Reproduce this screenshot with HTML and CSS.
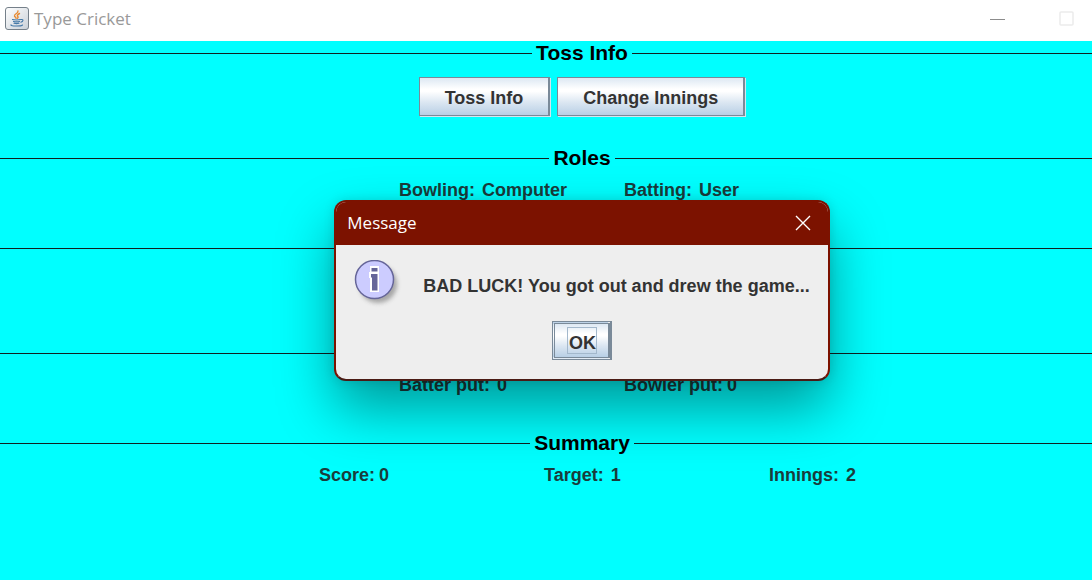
FILE: index.html
```html
<!DOCTYPE html>
<html lang="en">
<head>
<meta charset="utf-8">
<title>Type Cricket</title>
<link rel="stylesheet" href="styles.css">
</head>
<body>
<div class="frame">
  <header class="titlebar">
    <svg class="java-icon" viewBox="0 0 24 24" aria-hidden="true">
      <defs>
        <linearGradient id="tile" x1="0" y1="0" x2="1" y2="1">
          <stop offset="0" stop-color="#ffffff"/>
          <stop offset="1" stop-color="#c9d0d8"/>
        </linearGradient>
      </defs>
      <rect x="0.5" y="0.5" width="23" height="22" rx="2.5" fill="url(#tile)" stroke="#75808a"/>
      <g fill="none" stroke-linecap="round">
        <path d="M13 4c.5 2.500-4 3-3.500 5 .3 1 1.500 1.200 1.500 2.200M14.500 6.500c-2.500 1.200-2.500 2.300-1.600 3.100.5.600 0 1.200-.5 1.600" stroke="#e8882e" stroke-width="1.400"/>
        <path d="M7.500 12.500c1.500.6 6.500.6 8 0M8.500 14.400c1.500.5 4.500.5 6 0M9 16.200c1.500.5 3.500.5 5 0M16.300 12.500c2.400-.5 2.200 2-.5 2.700M6 17.800c-1 1.500 10 1.700 11.500.2" stroke="#4479a8" stroke-width="1.100"/>
      </g>
    </svg>
    <h1 class="window-title">Type Cricket</h1>
    <div class="window-controls">
      <button class="window-button" aria-label="Minimize"><svg width="16" height="16" viewBox="0 0 16 16"><path d="M0 8.500h15" stroke="#8c8c8c"/></svg></button>
      <button class="window-button" aria-label="Maximize" disabled><svg width="16" height="16" viewBox="0 0 16 16"><rect x="1" y="1" width="13" height="13" rx="1" fill="none" stroke="#ebebeb" stroke-width="1.500"/></svg></button>
    </div>
  </header>
  <main class="content">
    <section class="panel">
      <h2 class="panel-title">Toss Info</h2>
      <div class="buttons">
        <button class="button">Toss Info</button>
        <button class="button">Change Innings</button>
      </div>
    </section>
    <section class="panel">
      <h2 class="panel-title">Roles</h2>
      <div class="row row-two">
        <p class="stat"><span>Bowling:</span><span>Computer</span></p>
        <p class="stat"><span>Batting:</span><span>User</span></p>
      </div>
    </section>
    <section class="panel panel-tall">
      <div class="panel-title panel-untitled"></div>
    </section>
    <section class="panel">
      <div class="panel-title panel-untitled"></div>
      <div class="row row-two">
        <p class="stat"><span>Batter put:</span><span>0</span></p>
        <p class="stat tight"><span>Bowler put:</span><span>0</span></p>
      </div>
    </section>
    <section class="panel">
      <h2 class="panel-title">Summary</h2>
      <div class="row row-three">
        <p class="stat tight"><span>Score:</span><span>0</span></p>
        <p class="stat"><span>Target:</span><span>1</span></p>
        <p class="stat"><span>Innings:</span><span>2</span></p>
      </div>
    </section>
  </main>
  <div class="overlay">
    <div class="message" role="dialog" aria-labelledby="message-title">
      <div class="message-bar">
        <h2 class="message-title" id="message-title">Message</h2>
        <button class="close" aria-label="Close"><svg width="16" height="16" viewBox="0 0 16 16"><path d="M1 1l14 14M15 1L1 15" stroke="#fff" stroke-width="1.400"/></svg></button>
      </div>
      <div class="message-body">
        <div class="message-row">
          <svg class="info" viewBox="0 0 48 50" aria-hidden="true">
            <defs><filter id="soft" x="-30%" y="-30%" width="160%" height="160%"><feGaussianBlur stdDeviation="2.200"/></filter></defs>
            <circle cx="24" cy="24" r="19" fill="#888" opacity="0.700" filter="url(#soft)"/>
            <circle cx="20.500" cy="19.500" r="19" fill="#ccccff" stroke="#666699" stroke-width="1.500"/>
            <path d="M16 6h9v7h-9zM15 12h10v20h-9v-14h-1z" fill="#fff"/>
            <path d="M17.500 8h6v3.500h-6zM17 14h6.500v16.500H18v-13h-1z" fill="#666699"/>
          </svg>
          <p class="message-text">BAD LUCK! You got out and drew the game...</p>
        </div>
        <button class="button ok"><span class="focus">OK</span></button>
      </div>
    </div>
  </div>
</div>
</body>
</html>
```
FILE: styles.css
```css
:root { --shift: 72px; }

* { box-sizing: border-box; }

body {
  margin: 0;
  background: #00ffff;
  font: bold 18px/20px "Liberation Sans", Arial, sans-serif;
  color: #333333;
}

h1, h2, p { margin: 0; }

.frame {
  position: relative;
  min-height: 100vh;
}

.titlebar {
  display: flex;
  align-items: center;
  height: 41px;
  padding: 0 17px 4px 5px;
  background: #ffffff;
}

.java-icon { width: 24px; height: 24px; }

.window-title {
  margin-left: 5px;
  font: 17px/24px "Open Sans", "Noto Sans", sans-serif;
  color: #999999;
}

.window-controls { display: flex; gap: 53px; margin-left: auto; }

.window-button, .close {
  display: flex;
  padding: 0;
  border: 0;
  background: none;
}

.panel { padding-bottom: 36px; }
.panel:first-child { padding-bottom: 30px; }
.panel-tall { min-height: 105px; }

.panel-title {
  display: flex;
  align-items: center;
  gap: 4px;
  height: 24px;
  font-size: 21px;
  line-height: 26px;
  color: #000000;
}

.panel-title::before, .panel-title::after {
  content: "";
  flex: 1 1 0;
  height: 1px;
  background: #102020;
}

/* The longer left rule keeps titles on the same axis as the rows. */
.panel-title::before { flex-basis: var(--shift); }

.panel-untitled { gap: 0; }

.buttons {
  display: flex;
  justify-content: center;
  gap: 7px;
  padding: 12px 0 0 var(--shift);
}

.button {
  height: 39px;
  padding: 2px 25px 0;
  border: 1px solid #7a8a99;
  border-right-width: 2px;
  border-radius: 0;
  background: linear-gradient(#dde8f3 0%, #ffffff 30%, #ffffff 36%, #dce7f2 65%, #b8cfe5 100%);
  box-shadow: 1px 1px 0 #d5e5ee;
  font: inherit;
  color: #333333;
}

.row {
  display: grid;
  justify-content: center;
  padding: 10px 0 0 var(--shift);
}

.row-two { grid-template-columns: 225px 141px; }
.row-three { grid-template-columns: 225px 225px 76px; }

.stat {
  display: flex;
  gap: 7px;
  white-space: nowrap;
  color: #1a3c3c;
}

.tight { gap: 4px; }

.overlay {
  position: absolute;
  inset: 0 0 0 var(--shift);
  display: grid;
  place-items: center;
}

.message {
  overflow: hidden;
  border: 2px solid #7c1200;
  border-bottom-color: #4a1a14;
  border-radius: 12px;
  background: #eeeeee;
  box-shadow: 0 28px 56px rgba(0, 0, 0, 0.4), 0 0 12px rgba(0, 0, 0, 0.12);
}

.message-bar {
  display: flex;
  align-items: center;
  justify-content: space-between;
  height: 43px;
  padding: 0 17px 0 11px;
  background: #7c1200;
}

.message-title {
  font: 17px/24px "Open Sans", "Noto Sans", sans-serif;
  color: #ffffff;
}

.message-body {
  display: flex;
  flex-direction: column;
  align-items: center;
  gap: 11px;
  padding: 15px 18px 19px;
}

.message-row {
  display: flex;
  align-items: center;
  gap: 21px;
}

.info { width: 48px; height: 50px; }

.message-text {
  padding-top: 2px;
  white-space: nowrap;
}

.ok {
  padding: 0 11px 0 12px;
  border: 3px double #7a8a99;
  border-right: 4px solid #7a8a99;
  box-shadow: none;
}

.focus {
  display: block;
  padding: 5px 0 0 1px;
  border: 1px solid #a3b8cc;
}
```
